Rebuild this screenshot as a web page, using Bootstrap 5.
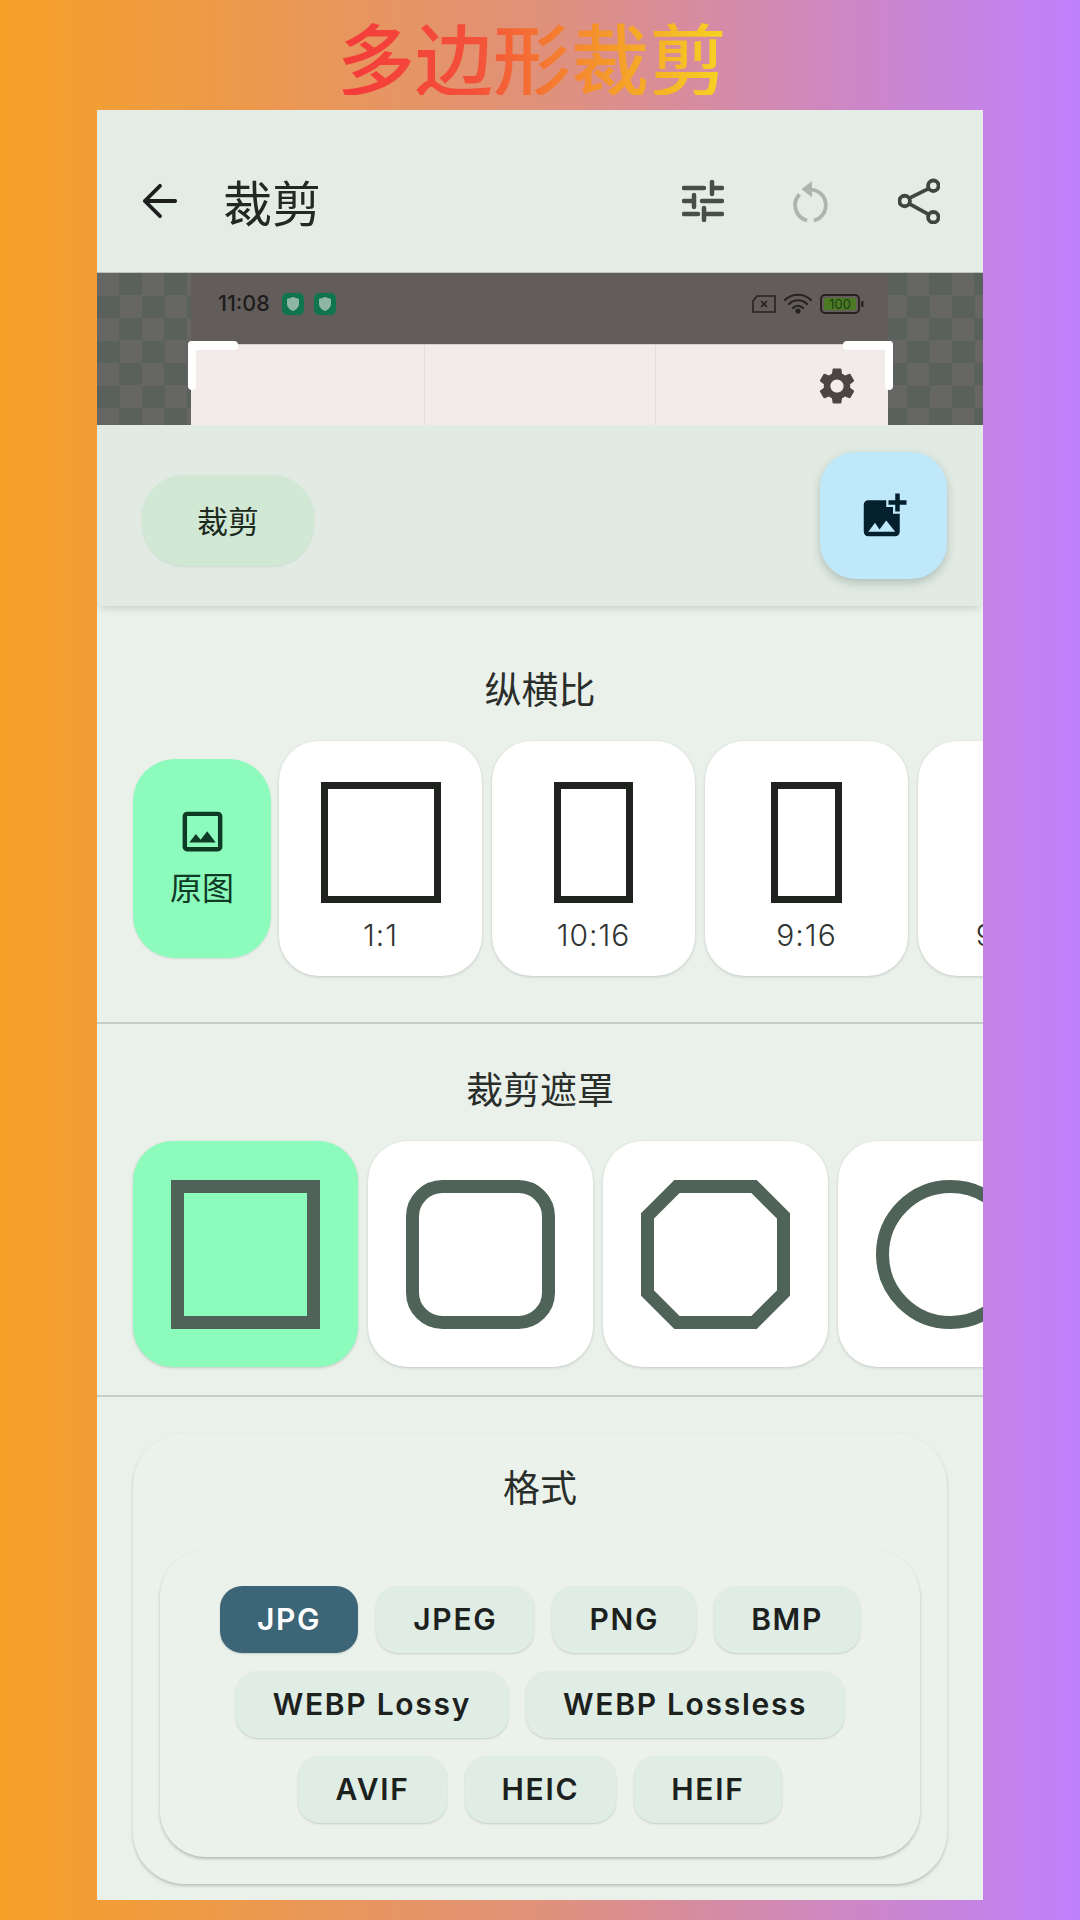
<!DOCTYPE html>
<html lang="zh">
<head>
<meta charset="UTF-8" />
<title>多边形裁剪</title>
<link href="https://cdn.jsdelivr.net/npm/bootstrap@5.3.2/dist/css/bootstrap.min.css" rel="stylesheet" />
<style>
  html, body { height: 1920px; overflow: hidden; }
  body {
    margin: 0;
    background: linear-gradient(90deg, #f6a027 0%, #e0917a 50%, #bf80fd 100%);
    font-family: "Noto Sans CJK SC", "Noto Sans", sans-serif;
    color: #262b27;
  }
  .promo { height: 110px; padding: 1px 16px 0 0; }
  .promo-text {
    font-size: 78px; line-height: 1; font-weight: 500;
    background: linear-gradient(90deg, #f43a3a 0%, #f4503a 35%, #f59a2a 70%, #f6d522 100%);
    -webkit-background-clip: text; background-clip: text;
    color: transparent;
  }
  .phone { width: 886px; height: 1790px; margin: 0 auto; background: #eaf1eb; overflow: hidden; }

  .appbar { height: 163px; padding: 20px 0 0 !important; background: #e4ece6; border-bottom: 1px solid #bcc4be; flex-wrap: nowrap; }
  .appbar-back { margin-left: 45px; width: 36px; height: 36px; }
  .appbar-title { font-size: 49px; line-height: 60px; margin-left: 45px; color: #242824; }
  .appbar-tools { margin-right: 43px; gap: 68px; }

  .crop-view {
    height: 152px; padding: 0 95px 0 94px;
    background-color: #666764;
    background-image: repeating-conic-gradient(#5a605c 0 25%, #666764 0 50%);
    background-size: 45px 45px;
  }
  .shot-status { height: 71px; background: #625c5b; padding: 0 24px 10px 27px; }
  .shot-time { font-family: "Inter", sans-serif; font-size: 21.5px; font-weight: 500; color: #1f1c1c; margin-right: 12px; }
  .shot-badge { width: 22px; height: 22px; border-radius: 5px; background: #0f7551; margin-right: 10px; }
  .shot-body { height: 81px; padding-left: 2px; background: #f3ebe9; border-top: 1px solid #d8d1cf; }
  .shot-col { width: 233px; border-right: 1px solid #e2dbd9; }
  .shot-col:last-child { border-right: 0; padding: 19px 29px 0 0; flex: 1 1 auto; }
  .crop-corner { position: absolute; width: 50px; height: 49px; top: -3px; }
  .crop-corner::before, .crop-corner::after { content: ""; position: absolute; background: #fff; border-radius: 4px; }
  .crop-corner::before { top: 0; left: 0; right: 0; height: 9px; }
  .crop-corner::after { top: 0; bottom: 0; width: 8px; }
  .crop-corner.tl { left: -3px; }
  .crop-corner.tl::after { left: 0; }
  .crop-corner.tr { right: -5px; }
  .crop-corner.tr::after { right: 0; }

  .tool-bar { height: 181px; padding: 0 36px 0 45px; background: #e1ebe3; box-shadow: 0 6px 8px -4px rgba(60,70,60,.2); position: relative; }
  .tool-chip { width: 172px; height: 91px; margin-top: 9px; border-radius: 42px; background: #d1e8d5; font-size: 31px; color: #1c2a20; box-shadow: 0 1px 2px rgba(60,70,60,.1); }
  .tool-fab { width: 127px; height: 127px; border-radius: 36px; background: #bfe9fa; box-shadow: 0 4px 10px rgba(40,60,60,.25); }

  .pick-section { border-bottom: 2px solid #c5cec8; padding-left: 36px; }
  .pick-title { font-size: 37px; line-height: 50px; margin: 0 0 28px -36px; color: #2a2e2b; }
  .ratio-section { height: 418px; padding-top: 57px; }
  .mask-section { height: 373px; padding-top: 39px; }
  .pick-row { gap: 10px; }
  .ratio-tile { flex: 0 0 203px; height: 235px; border-radius: 40px; background: #fff; box-shadow: 0 1px 3px rgba(50,60,50,.22); padding-top: 41px; }
  .ratio-orig { flex: 0 0 138px; height: 199px; margin-right: -2px; border-radius: 42px; background: #8cfbbb; color: #0f3a25; font-size: 32px; line-height: 40px; box-shadow: 0 1px 2px rgba(50,60,50,.12); gap: 8px; padding-bottom: 7px; }
  .ratio-box { height: 121px; border: 7px solid #202220; }
  .ratio-1 { width: 120px; } .ratio-10 { width: 79px; } .ratio-9 { width: 71px; } .ratio-phone { width: 60px; }
  .ratio-label { font-family: "Inter", sans-serif; font-weight: 300; font-size: 30px; line-height: 36px; margin-top: 14px; color: #2f3331; letter-spacing: 1px; }
  .mask-tile { flex: 0 0 225px; height: 226px; border-radius: 40px; background: #fff; box-shadow: 0 1px 3px rgba(50,60,50,.22); }
  .mask-tile.is-on { background: #8cfbbb; }

  .format-card { margin: 36px 36px 0; height: 451px; padding: 28px 27px 0; border: 0; border-radius: 52px; background: #ebf2ec; box-shadow: 0 2px 3px rgba(50,60,50,.25), 0 0 1px rgba(50,60,50,.06); }
  .format-inner { height: 307px; margin-top: 39px; padding: 36px 30px 0; gap: 18px; align-content: flex-start; border-radius: 46px; background: #ebf2ec; box-shadow: 0 2px 3px rgba(50,60,50,.28), 0 0 1px rgba(50,60,50,.05); }
  .format-btn { height: 67px; padding: 0 37px; border: 0; border-radius: 22px; background: #e0ede4; color: #1d211e; font-family: "Inter", sans-serif; font-weight: 600; font-size: 30px; letter-spacing: 1.7px; box-shadow: 0 1px 2px rgba(50,60,50,.2); display: flex; align-items: center; }
  .format-btn.is-on { background: #3c6577; color: #fff; }
</style>
</head>
<body>
  <div class="promo d-flex justify-content-center align-items-center">
    <span class="promo-text">多边形裁剪</span>
  </div>

  <div class="phone">
    <!-- top bar -->
    <nav class="navbar appbar">
      <div class="d-flex align-items-center">
        <svg class="appbar-back" viewBox="0 0 38 38" fill="none" stroke="#1c1f1d" stroke-width="4" stroke-linecap="round" stroke-linejoin="round"><path d="M3 19H35M19 3 3 19 19 35"/></svg>
        <span class="appbar-title">裁剪</span>
      </div>
      <div class="d-flex align-items-center appbar-tools">
        <svg width="42" height="42" viewBox="0 0 42 42" fill="none" stroke="#484d49" stroke-width="4.5" stroke-linecap="round"><path d="M2 8H22M30 2V14M30 8H40M2 21H12M12 15V27M20 21H40M2 34H16M22 28V40M22 34H40"/></svg>
        <svg width="38" height="44" viewBox="0 0 40 44" fill="none" stroke="#adb5af" stroke-width="4"><path d="M20 10A16.500 16.500 0 0 1 23 42.500"/><path d="M16 42.500A16.500 16.500 0 0 1 8 15"/><path d="M21 1V18L10 9.500Z" fill="#adb5af" stroke="none"/></svg>
        <svg width="42" height="46" viewBox="0 0 44 48" fill="none" stroke="#3f4541" stroke-width="4"><circle cx="37" cy="8" r="5.500"/><circle cx="7" cy="24" r="5.500"/><circle cx="37" cy="41" r="5.500"/><path d="M32 11 12 21M12 27 32 38"/></svg>
      </div>
    </nav>

    <!-- image being cropped -->
    <div class="crop-view">
      <div class="position-relative">
        <div class="shot-status d-flex align-items-center">
          <span class="shot-time">11:08</span>
          <span class="shot-badge d-flex align-items-center justify-content-center">
            <svg width="12" height="14" viewBox="0 0 12 14"><path d="M6 0 12 2V7C12 10 9 13 6 14 3 13 0 10 0 7V2Z" fill="#8fb5a4"/></svg>
          </span>
          <span class="shot-badge d-flex align-items-center justify-content-center">
            <svg width="12" height="14" viewBox="0 0 12 14"><path d="M6 0 12 2V7C12 10 9 13 6 14 3 13 0 10 0 7V2Z" fill="#8fb5a4"/></svg>
          </span>
          <span class="ms-auto d-flex align-items-center gap-2">
            <svg width="25" height="18" viewBox="0 0 25 18" fill="none" stroke="#262222" stroke-width="1.600"><path d="M6 1H24V17H2V6Z"/><path d="M10 6 16 12M16 6 10 12"/></svg>
            <svg width="28" height="22" viewBox="0 0 28 22" fill="none" stroke="#262222" stroke-width="2.200" stroke-linecap="round"><path d="M1 7C8 0 20 0 27 7M5 11C10 6 18 6 23 11M9 15C12 12 16 12 19 15"/><circle cx="14" cy="18" r="1.500" fill="#262222"/></svg>
            <svg width="44" height="20" viewBox="0 0 44 20"><rect x="1" y="1" width="38" height="18" rx="4" fill="none" stroke="#262222" stroke-width="2"/><rect x="4" y="4" width="32" height="12" rx="2" fill="#4b7a25"/><rect x="41" y="7" width="2.500" height="6" rx="1" fill="#262222"/><text x="20" y="15" text-anchor="middle" font-family="Inter, sans-serif" font-size="13" fill="#1f3d10">100</text></svg>
          </span>
        </div>
        <div class="shot-body d-flex">
          <div class="shot-col"></div>
          <div class="shot-col"></div>
          <div class="shot-col d-flex justify-content-end align-items-start">
            <svg width="44" height="44" viewBox="0 0 24 24" fill="#4b4644"><path d="M19.140 12.940c.04-.3.06-.61.06-.94 0-.32-.02-.64-.07-.94l2.030-1.580c.18-.14.23-.41.12-.61l-1.920-3.320c-.12-.22-.37-.29-.59-.22l-2.390.96c-.5-.38-1.030-.7-1.620-.94l-.36-2.540c-.04-.24-.24-.41-.48-.41h-3.840c-.24 0-.43.17-.47.41l-.36 2.540c-.59.24-1.130.57-1.620.94l-2.390-.96c-.22-.08-.47 0-.59.22L2.740 8.870c-.12.21-.08.47.12.61l2.030 1.580c-.05.3-.09.63-.09.94s.02.64.07.94l-2.030 1.580c-.18.14-.23.41-.12.61l1.920 3.320c.12.22.37.29.59.22l2.390-.96c.5.38 1.030.7 1.620.94l.36 2.540c.05.24.24.41.48.41h3.840c.24 0 .44-.17.47-.41l.36-2.540c.59-.24 1.130-.56 1.620-.94l2.390.96c.22.08.47 0 .59-.22l1.920-3.320c.12-.22.07-.47-.12-.61l-2.010-1.580zM12 15.600c-1.980 0-3.600-1.620-3.600-3.600s1.620-3.600 3.600-3.600 3.600 1.620 3.600 3.600-1.620 3.600-3.600 3.600z"/></svg>
          </div>
        </div>
        <div class="position-absolute w-100" style="top:71px">
          <div class="crop-corner tl"></div>
          <div class="crop-corner tr"></div>
        </div>
      </div>
    </div>

    <!-- tool row -->
    <div class="tool-bar d-flex align-items-center justify-content-between">
      <div class="tool-chip d-flex align-items-center justify-content-center">裁剪</div>
      <div class="tool-fab d-flex align-items-center justify-content-center">
        <svg width="54" height="54" viewBox="0 0 24 24" fill="#03202c"><path d="M19 7v2.990s-1.990.01-2 0V7h-3s.01-1.990 0-2h3V2h2v3h3v2h-3zm-3 4V8h-3V5H5c-1.100 0-2 .9-2 2v12c0 1.100.9 2 2 2h12c1.100 0 2-.9 2-2v-8h-3zM5 19l3-4 2 3 3-4 4 5H5z"/></svg>
      </div>
    </div>

    <!-- aspect ratio -->
    <section class="pick-section ratio-section overflow-hidden">
      <div class="pick-title text-center">纵横比</div>
      <div class="pick-row d-flex align-items-center">
        <div class="ratio-orig d-flex flex-column align-items-center justify-content-center">
          <svg width="53" height="53" viewBox="0 0 24 24" fill="#0f3a25"><path d="M19 5v14H5V5h14m0-2H5c-1.100 0-2 .9-2 2v14c0 1.100.9 2 2 2h14c1.100 0 2-.9 2-2V5c0-1.100-.9-2-2-2zm-4.860 8.860l-3 3.870L9 13.140 6 17h12l-3.860-5.140z"/></svg>
          <span>原图</span>
        </div>
        <div class="ratio-tile d-flex flex-column align-items-center"><div class="ratio-box ratio-1"></div><div class="ratio-label">1:1</div></div>
        <div class="ratio-tile d-flex flex-column align-items-center"><div class="ratio-box ratio-10"></div><div class="ratio-label">10:16</div></div>
        <div class="ratio-tile d-flex flex-column align-items-center"><div class="ratio-box ratio-9"></div><div class="ratio-label">9:16</div></div>
        <div class="ratio-tile d-flex flex-column align-items-center"><div class="ratio-box ratio-phone"></div><div class="ratio-label">9:19.5</div></div>
      </div>
    </section>

    <!-- crop mask -->
    <section class="pick-section mask-section overflow-hidden">
      <div class="pick-title text-center">裁剪遮罩</div>
      <div class="pick-row d-flex">
        <div class="mask-tile is-on d-flex align-items-center justify-content-center">
          <svg width="149" height="149" viewBox="0 0 149 149" fill="none" stroke="#506358" stroke-width="13"><rect x="6.500" y="6.500" width="136" height="136"/></svg>
        </div>
        <div class="mask-tile d-flex align-items-center justify-content-center">
          <svg width="149" height="149" viewBox="0 0 149 149" fill="none" stroke="#506358" stroke-width="13"><rect x="6.500" y="6.500" width="136" height="136" rx="30"/></svg>
        </div>
        <div class="mask-tile d-flex align-items-center justify-content-center">
          <svg width="149" height="149" viewBox="0 0 149 149" fill="none" stroke="#506358" stroke-width="13"><path d="M36 6.500H113L142.500 36V113L113 142.500H36L6.500 113V36Z"/></svg>
        </div>
        <div class="mask-tile d-flex align-items-center justify-content-center">
          <svg width="149" height="149" viewBox="0 0 149 149" fill="none" stroke="#506358" stroke-width="13"><circle cx="74.500" cy="74.500" r="68"/></svg>
        </div>
      </div>
    </section>

    <!-- output format -->
    <div class="card format-card">
      <div class="pick-title text-center m-0">格式</div>
      <div class="format-inner d-flex flex-wrap justify-content-center">
        <button class="btn format-btn is-on">JPG</button>
        <button class="btn format-btn">JPEG</button>
        <button class="btn format-btn">PNG</button>
        <button class="btn format-btn">BMP</button>
        <button class="btn format-btn">WEBP Lossy</button>
        <button class="btn format-btn">WEBP Lossless</button>
        <button class="btn format-btn">AVIF</button>
        <button class="btn format-btn">HEIC</button>
        <button class="btn format-btn">HEIF</button>
      </div>
    </div>
  </div>

  <script src="https://cdn.jsdelivr.net/npm/bootstrap@5.3.2/dist/js/bootstrap.bundle.min.js"></script>
</body>
</html>
